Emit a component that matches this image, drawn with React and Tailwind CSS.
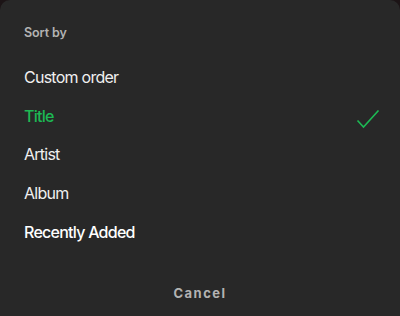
export default function App() {
  const items = [
    { label: "Custom order", cls: "text-[#f0f0f0] font-normal" },
    { label: "Title", cls: "text-[#1db954] font-medium", check: true },
    { label: "Artist", cls: "text-[#f0f0f0] font-normal" },
    { label: "Album", cls: "text-[#f0f0f0] font-normal" },
    { label: "Recently Added", cls: "text-white font-medium" },
  ];
  return (
    <div className="w-[400px] h-[316px] bg-[#1c1416]" style={{ fontFamily: "Inter, 'Noto Sans', sans-serif" }}>
      <div className="w-full h-full bg-[#282828] rounded-t-[10px] flex flex-col pt-[25px]">
        <div className="px-6 text-[12.5px] leading-4 font-semibold tracking-[-0.1px] text-[#b3b3b3]">Sort by</div>
        <div className="mt-[16.6px] flex flex-col">
          {items.map((it) => (
            <div key={it.label} className="h-[38.75px] flex items-center justify-between pl-6 pr-[20px]">
              <span className={`text-[16px] leading-5 tracking-[-0.75px] ${it.cls}`}>{it.label}</span>
              {it.check && (
                <svg width="24" height="20" viewBox="0 0 24 20" className="mt-[8px]">
                  <path d="M1.5 10.5 L7.5 17 L22.5 0.5" fill="none" stroke="#1db954" strokeWidth="1.6" />
                </svg>
              )}
            </div>
          ))}
        </div>
        <div className="mt-[33.6px] text-center text-[13px] leading-4 font-bold tracking-[1.5px] text-[#b3b3b3]">Cancel</div>
      </div>
    </div>
  );
}
